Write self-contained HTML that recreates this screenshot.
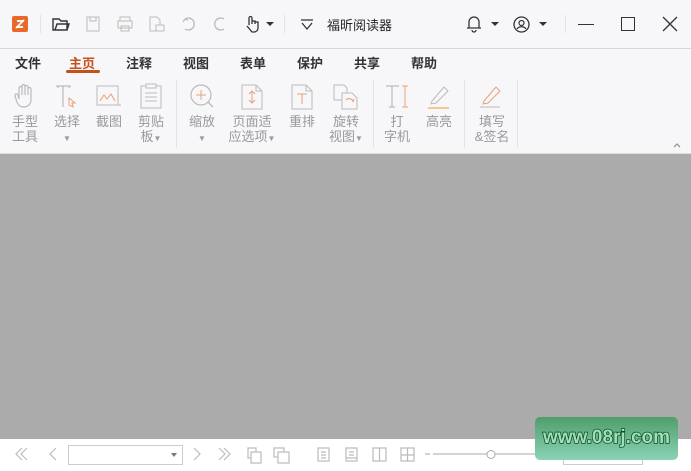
<!DOCTYPE html><html><head><meta charset="utf-8"><style>
*{margin:0;padding:0;box-sizing:border-box}
body{width:691px;height:471px;overflow:hidden;background:#f7f7fa;font-family:"Liberation Sans","Noto Sans CJK SC",sans-serif;position:relative}
.a{position:absolute}
.t{font-size:13px;color:#222;position:absolute}
.m{font-size:13px;font-weight:bold;color:#333;position:absolute;top:53px}
.l{font-size:13px;color:#999;position:absolute;text-align:center;line-height:15px}
.sep{position:absolute;width:1px;background:#e3e3e6}
svg{position:absolute;overflow:visible}
</style></head><body>
<div class="a" style="left:12px;top:16px;width:16px;height:16px;background:#e8692a;border-radius:2px"></div>
<svg style="left:12px;top:16px" width="16" height="16"><path d="M4 12 L12 4 M5 5 H11 M5 11 H11" stroke="#fff" stroke-width="1.8" fill="none"/></svg>
<div class="sep" style="left:40px;top:15px;height:18px"></div>
<svg style="left:52px;top:16px" width="18" height="16"><path d="M1 3 H7 L9 5 H15 V14 H1 Z M3 14 L5 8 H17 L15 14" stroke="#333" stroke-width="1.4" fill="none"/></svg>
<svg style="left:86px;top:16px" width="14" height="16"><rect x="1" y="1" width="12" height="14" stroke="#bbb" fill="none"/><rect x="4" y="1" width="6" height="4" stroke="#bbb" fill="none"/></svg>
<svg style="left:117px;top:16px" width="16" height="16"><rect x="3" y="1" width="10" height="4" stroke="#bbb" fill="none"/><rect x="1" y="5" width="14" height="7" stroke="#bbb" fill="none"/><rect x="4" y="10" width="8" height="5" stroke="#bbb" fill="none"/></svg>
<svg style="left:149px;top:16px" width="16" height="16"><path d="M1 1 H8 L11 4 V15 H1 Z" stroke="#bbb" fill="none"/><rect x="7" y="9" width="8" height="6" stroke="#bbb" fill="#f7f7fa"/></svg>
<svg style="left:182px;top:16px" width="14" height="16"><path d="M3 3 A6 6 0 1 1 3 13 M3 3 L1 6 M3 3 L6 4" stroke="#bbb" fill="none" stroke-width="1.3"/></svg>
<svg style="left:213px;top:16px" width="14" height="16"><path d="M11 3 A6 6 0 1 0 11 13" stroke="#bbb" fill="none" stroke-width="1.3"/></svg>
<svg style="left:245px;top:15px" width="16" height="18"><path d="M4 10 V3 A1.5 1.5 0 0 1 7 3 V9 M7 6 H10 V9 M10 7 H13 V13 A4 4 0 0 1 9 17 H7 L2 11" stroke="#333" fill="none" stroke-width="1.3"/></svg>
<div class="a" style="left:266px;top:22px;border:4px solid transparent;border-top:4px solid #333"></div>
<div class="sep" style="left:284px;top:15px;height:18px"></div>
<svg style="left:300px;top:19px" width="14" height="12"><path d="M1 1 H13 M2 4 L7 10 L12 4" stroke="#333" fill="none" stroke-width="1.3"/></svg>
<div class="t" style="left:327px;top:15px">福昕阅读器</div>
<svg style="left:466px;top:15px" width="16" height="18"><path d="M3 13 V7 A5 5 0 0 1 13 7 V13 H15 H1 Z M6 15 A2 2 0 0 0 10 15" stroke="#333" fill="none" stroke-width="1.3"/></svg>
<div class="a" style="left:491px;top:22px;border:4px solid transparent;border-top:4px solid #333"></div>
<svg style="left:513px;top:16px" width="17" height="17"><circle cx="8.5" cy="8.5" r="7.5" stroke="#333" fill="none" stroke-width="1.3"/><circle cx="8.5" cy="7" r="2.5" stroke="#333" fill="none" stroke-width="1.2"/><path d="M4 13 A5 4 0 0 1 13 13" stroke="#333" fill="none" stroke-width="1.2"/></svg>
<div class="a" style="left:539px;top:22px;border:4px solid transparent;border-top:4px solid #333"></div>
<div class="sep" style="left:565px;top:15px;height:18px"></div>
<div class="a" style="left:578px;top:24px;width:16px;height:1px;background:#333"></div>
<div class="a" style="left:621px;top:17px;width:14px;height:14px;border:1.3px solid #333"></div>
<svg style="left:663px;top:17px" width="14" height="14"><path d="M0 0 L14 14 M14 0 L0 14" stroke="#333" stroke-width="1.3"/></svg>
<div class="a" style="left:0;top:48px;width:691px;height:1px;background:#d8d8dc"></div>
<div class="m" style="left:15px">文件</div>
<div class="m" style="left:69px;color:#c4501a">主页</div>
<div class="a" style="left:66px;top:70px;width:34px;height:3px;background:#c4501a;border-radius:2px"></div>
<div class="m" style="left:126px">注释</div>
<div class="m" style="left:183px">视图</div>
<div class="m" style="left:240px">表单</div>
<div class="m" style="left:297px">保护</div>
<div class="m" style="left:354px">共享</div>
<div class="m" style="left:411px">帮助</div>
<svg style="left:13px;top:83px" width="24" height="26"><path d="M6 16 V5 A1.5 1.5 0 0 1 9 5 V12 V3 A1.5 1.5 0 0 1 12 3 V12 V4 A1.5 1.5 0 0 1 15 4 V12 V6 A1.5 1.5 0 0 1 18 6 V17 A7 7 0 0 1 11 24 A7 7 0 0 1 4 19 L2 13 A1.5 1.5 0 0 1 5 12 Z" stroke="#bbb" fill="none" stroke-width="1.2"/></svg>
<svg style="left:55px;top:85px" width="24" height="24"><path d="M1 1 H16 M8 1 V22 M3 1 V3 M14 1 V3" stroke="#bbb" fill="none" stroke-width="1.2"/><path d="M14 13 L20 18 L17 18 L18 22 L14 20 Z" stroke="#e8a07a" fill="none"/></svg>
<svg style="left:96px;top:85px" width="26" height="24"><rect x="1" y="1" width="21" height="19" stroke="#bbb" fill="none"/><path d="M4 16 L8 10 L11 14 L15 9 L19 16" stroke="#e8a07a" fill="none"/><path d="M1 20 H25" stroke="#bbb"/></svg>
<svg style="left:140px;top:83px" width="22" height="26"><rect x="1" y="3" width="20" height="22" stroke="#bbb" fill="none"/><rect x="6" y="1" width="10" height="4" stroke="#bbb" fill="#f7f7fa"/><path d="M5 10 H17 M5 14 H17 M5 18 H17" stroke="#bbb"/></svg>
<div class="sep" style="left:176px;top:80px;height:68px"></div>
<svg style="left:190px;top:84px" width="26" height="26"><circle cx="11" cy="11" r="10" stroke="#bbb" fill="none" stroke-width="1.2"/><path d="M11 6 V16 M6 11 H16" stroke="#e8a07a"/><path d="M18 18 L23 23" stroke="#bbb" stroke-width="1.3"/></svg>
<svg style="left:241px;top:84px" width="22" height="26"><path d="M1 1 H15 L21 7 V25 H1 Z M15 1 V7 H21" stroke="#bbb" fill="none"/><path d="M11 7 V19 M8 10 L11 7 L14 10 M8 16 L11 19 L14 16" stroke="#e8a07a" fill="none"/></svg>
<svg style="left:291px;top:84px" width="22" height="26"><path d="M1 1 H15 L21 7 V25 H1 Z M15 1 V7 H21" stroke="#bbb" fill="none"/><path d="M6 10 H16 M11 10 V20" stroke="#e8a07a" fill="none"/></svg>
<svg style="left:333px;top:84px" width="26" height="26"><path d="M1 1 H11 L14 4 V16 H1 Z" stroke="#bbb" fill="none"/><path d="M9 9 H19 L24 14 V25 H9 Z" stroke="#bbb" fill="#f7f7fa"/><path d="M13 16 A4 4 0 0 1 20 18 M20 18 L21 15" stroke="#e8a07a" fill="none"/></svg>
<div class="sep" style="left:373px;top:80px;height:68px"></div>
<svg style="left:385px;top:85px" width="26" height="24"><path d="M1 1 H14 M7 1 V22 M4 22 H10" stroke="#bbb" fill="none" stroke-width="1.2"/><path d="M20 1 V22 M17 1 H23 M17 22 H23" stroke="#e8a07a" fill="none"/></svg>
<svg style="left:427px;top:84px" width="24" height="26"><path d="M5 17 L17 3 L21 7 L9 19 L4 20 Z" stroke="#bbb" fill="none"/><path d="M1 24 H22" stroke="#f0c890" stroke-width="2"/></svg>
<div class="sep" style="left:464px;top:80px;height:68px"></div>
<svg style="left:479px;top:84px" width="24" height="26"><path d="M5 17 L17 3 L21 7 L9 19 L4 20 Z" stroke="#e8a07a" fill="none"/><path d="M1 23 H21" stroke="#bbb"/></svg>
<div class="sep" style="left:517px;top:80px;height:68px"></div>
<div class="l" style="left:6px;top:114px;width:38px">手型<br>工具</div>
<div class="l" style="left:48px;top:114px;width:38px">选择<br><span style="font-size:8px">▼</span></div>
<div class="l" style="left:90px;top:114px;width:38px">截图</div>
<div class="l" style="left:132px;top:114px;width:38px">剪贴<br>板<span style="font-size:8px">▼</span></div>
<div class="l" style="left:183px;top:114px;width:38px">缩放<br><span style="font-size:8px">▼</span></div>
<div class="l" style="left:224px;top:114px;width:56px">页面适<br>应选项<span style="font-size:8px">▼</span></div>
<div class="l" style="left:283px;top:114px;width:38px">重排</div>
<div class="l" style="left:324px;top:114px;width:44px">旋转<br>视图<span style="font-size:8px">▼</span></div>
<div class="l" style="left:378px;top:114px;width:38px">打<br>字机</div>
<div class="l" style="left:420px;top:114px;width:38px">高亮</div>
<div class="l" style="left:471px;top:114px;width:42px">填写<br>&amp;签名</div>
<svg style="left:673px;top:142px" width="8" height="6"><path d="M1 5 L4 2 L7 5" stroke="#999" fill="none" stroke-width="1.3"/></svg>
<div class="a" style="left:0;top:153px;width:691px;height:1px;background:#ddd"></div>
<div class="a" style="left:0;top:154px;width:691px;height:285px;background:#ababab"></div>
<div class="a" style="left:0;top:439px;width:691px;height:32px;background:#fff"></div>
<svg style="left:0;top:439px" width="691" height="32"><g stroke="#bbb" fill="none" stroke-width="1.2">
<path d="M22 9 L16 15 L22 21 M27 9 L21 15 L27 21"/><path d="M56 9 L50 15 L56 21"/>
<path d="M194 9 L200 15 L194 21"/><path d="M219 9 L225 15 L219 21 M224 9 L230 15 L224 21"/>
<rect x="248" y="9" width="8" height="10"/><rect x="251" y="13" width="10" height="11" fill="#fff"/>
<rect x="274" y="9" width="10" height="9"/><rect x="278" y="13" width="11" height="11" fill="#fff"/>
<rect x="318" y="9" width="11" height="13"/><path d="M321 13 H326 M321 16 H326 M321 19 H326"/>
<rect x="346" y="9" width="11" height="13"/><path d="M349 13 H354 M349 16 H354 M346 19 H357"/>
<rect x="373" y="9" width="13" height="13"/><path d="M379.5 9 V22"/>
<rect x="401" y="9" width="13" height="13"/><path d="M407.5 9 V22 M401 16 H414"/>
<path d="M425 15 H430 M433 15 H540"/></g>
<circle cx="491" cy="15.5" r="4" stroke="#aaa" fill="#fff"/></svg>
<div class="a" style="left:68px;top:445px;width:115px;height:20px;border:1px solid #ccc;background:#fff"></div>
<div class="a" style="left:171px;top:453px;border:3.5px solid transparent;border-top:4px solid #777"></div>
<div class="a" style="left:563px;top:445px;width:80px;height:20px;border:1px solid #ccc;background:#fff"></div>
<div class="a" style="left:535px;top:417px;width:143px;height:43px;border-radius:5px;background:linear-gradient(#4f9e6a,#8ad3b6);"></div>
<div class="a" style="left:535px;top:427px;width:143px;text-align:center;font-size:19px;font-weight:bold;color:#9ee0b8;-webkit-text-stroke:1.5px #0f4a26;paint-order:stroke fill;letter-spacing:0px">www.08rj.com</div>
</body></html>
